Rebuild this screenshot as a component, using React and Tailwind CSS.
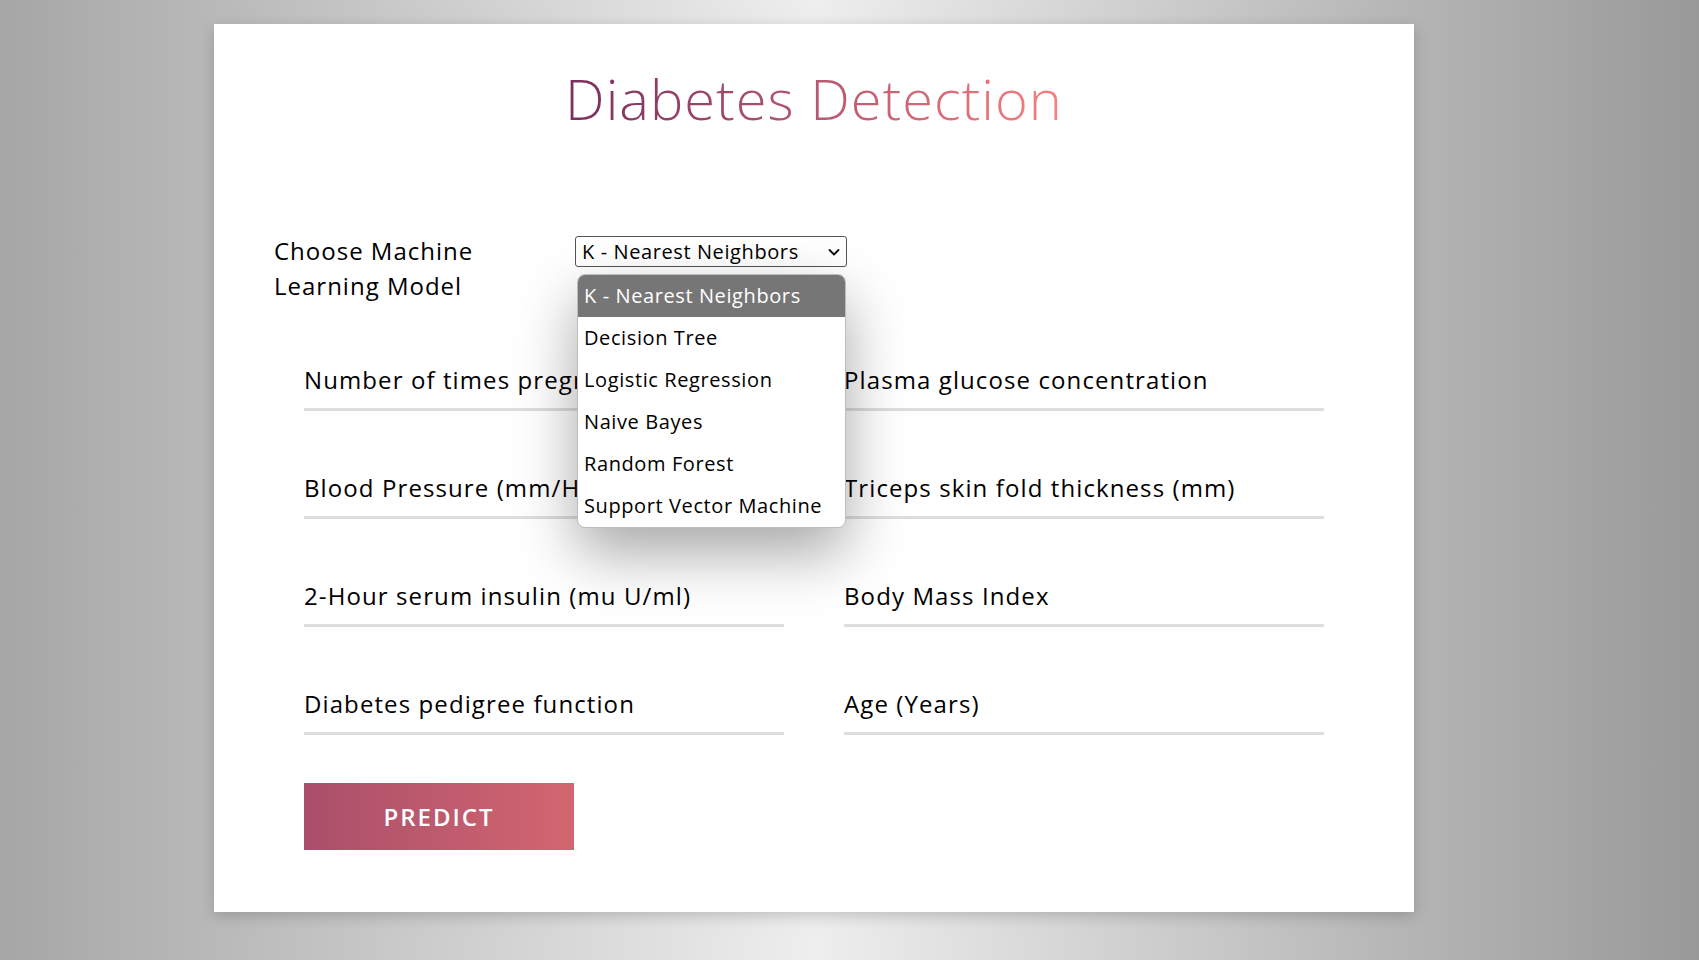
import { useState } from 'react'

const fields = [
  'Number of times pregnant',
  'Plasma glucose concentration',
  'Blood Pressure (mm/Hg)',
  'Triceps skin fold thickness (mm)',
  '2-Hour serum insulin (mu U/ml)',
  'Body Mass Index',
  'Diabetes pedigree function',
  'Age (Years)',
]

const models = [
  'K - Nearest Neighbors',
  'Decision Tree',
  'Logistic Regression',
  'Naive Bayes',
  'Random Forest',
  'Support Vector Machine',
]

function ChevronDown() {
  return (
    <svg width="14" height="14" viewBox="0 0 14 14" fill="none">
      <path d="M2.5 5l4.5 4.5 4.5-4.5" stroke="#111" strokeWidth="1.8" strokeLinecap="round" strokeLinejoin="round" />
    </svg>
  )
}

function App() {
  const [model, setModel] = useState(models[0])

  return (
    <div
      className="min-h-[960px] w-full bg-[linear-gradient(to_right,#a6a6a6_0%,#eeeeee_48%,#999999_100%)] pt-[24px] pb-[48px]"
      style={{ fontFamily: '"Open Sans", "Noto Sans", sans-serif' }}
    >
      <div className="ml-[214px] w-[1200px] h-[888px] bg-white shadow-[0_4px_14px_rgba(0,0,0,0.18)]">
        {/* heading */}
        <div className="pt-[38px] flex justify-center">
          <h1 className="text-[56px] font-light leading-[72px] tracking-[1px] bg-gradient-to-r from-[#7a2e5e] to-[#f88080] bg-clip-text text-transparent">
            Diabetes Detection
          </h1>
        </div>

        {/* model select */}
        <div className="mt-[102px] pl-[60px] flex items-start">
          <div className="w-[301px] -mt-[3px] text-[24px] leading-[35px] tracking-[1px] text-black">
            Choose Machine
            <br />
            Learning Model
          </div>
          <div className="relative">
            <div className="w-[272px] h-[31px] border border-[#555] rounded-[3px] flex items-center justify-between pl-[6px] pr-[5px] text-[20px] tracking-[0.6px] text-black">
              <span>{model}</span>
              <ChevronDown />
            </div>
            <div className="absolute z-10 left-[2px] top-[38px] w-[269px] bg-white border border-[#bdbdbd] rounded-[8px] overflow-hidden shadow-[0_25px_60px_rgba(0,0,0,0.35)]">
              {models.map((m) => (
                <div
                  key={m}
                  onClick={() => setModel(m)}
                  className={
                    m === model
                      ? 'h-[42px] flex items-center pl-[6px] text-[20px] tracking-[0.6px] bg-[#767676] text-white'
                      : 'h-[42px] flex items-center pl-[6px] text-[20px] tracking-[0.6px] text-black'
                  }
                >
                  {m}
                </div>
              ))}
            </div>
          </div>
        </div>

        {/* inputs */}
        <div className="mt-[48px] px-[90px] grid grid-cols-2 gap-x-[60px] gap-y-[48px]">
          {fields.map((f) => (
            <input
              key={f}
              type="text"
              placeholder={f}
              className="h-[60px] w-full border-b-[3px] border-[#dddddd] outline-none text-[24px] tracking-[1.1px] text-black placeholder:text-black bg-transparent"
            />
          ))}
        </div>

        <div className="px-[90px] mt-[48px]">
          <button className="w-[270px] h-[67px] bg-gradient-to-r from-[#a94f6a] to-[#d36670] text-white text-[24px] font-semibold tracking-[2px]">
            PREDICT
          </button>
        </div>
      </div>
    </div>
  )
}

export default App
